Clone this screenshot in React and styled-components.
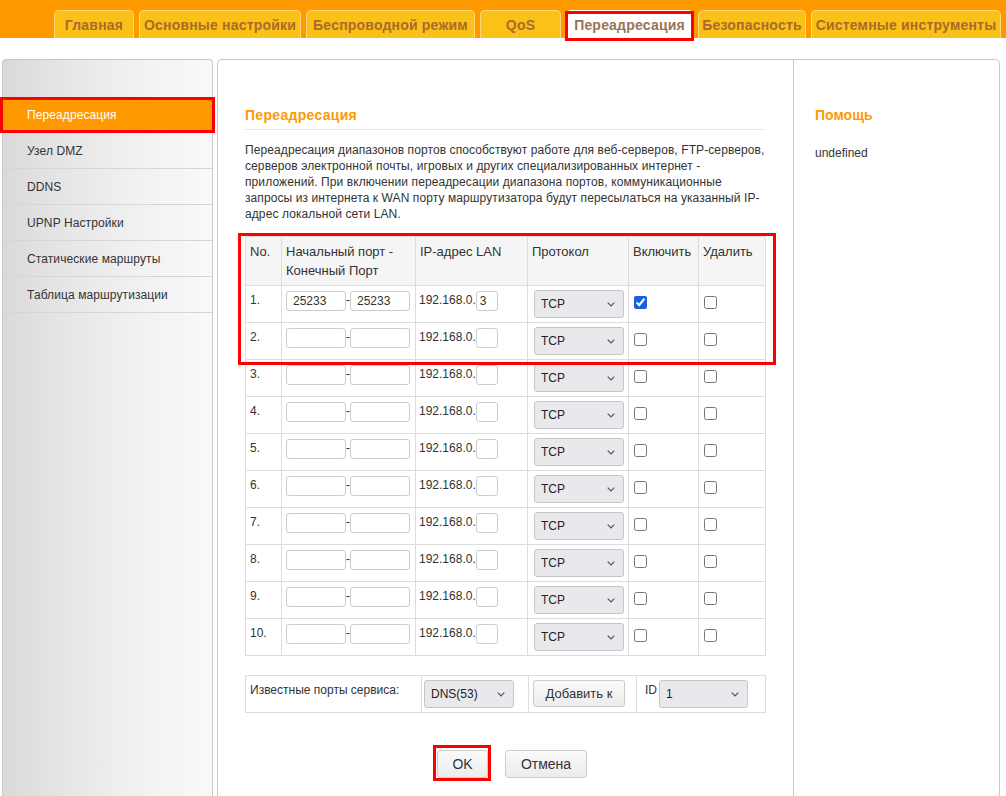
import React from 'react';
import styled, { createGlobalStyle, css } from 'styled-components';

const Global = createGlobalStyle`
  html, body { margin: 0; padding: 0; overflow: hidden; background: #fff; }
  body { font-family: "Liberation Sans", Arial, sans-serif; color: #333; }
  * { box-sizing: border-box; }
`;

const redBox = css`
  &::after {
    content: '';
    position: absolute;
    border: 3px solid #ff0000;
    pointer-events: none;
  }
`;

const Page = styled.div`
  height: 796px;
  display: flex;
  flex-direction: column;
  overflow: hidden;
`;

const Header = styled.div`
  height: 38px;
  flex: none;
  background: #ff9900;
  display: flex;
  align-items: flex-end;
  gap: 5px;
  padding-left: 54px;
`;

const Tab = styled.div`
  position: relative;
  height: 28px;
  width: ${p => p.$w}px;
  display: flex;
  align-items: center;
  justify-content: center;
  white-space: nowrap;
  background: ${p => (p.$active ? '#ffffff' : '#fbc116')};
  border: 1px solid ${p => (p.$active ? '#ffffff' : '#fdd97a')};
  border-bottom: none;
  border-radius: 5px 5px 0 0;
  font-weight: bold;
  font-size: 14px;
  letter-spacing: 0.2px;
  color: ${p => (p.$active ? '#9a7353' : '#a86b2e')};
  ${p => p.$marked && css`
    ${redBox}
    &::after { left: -2px; right: -2px; top: 0; bottom: -3px; }
  `}
`;

const Body = styled.div`
  flex: 1;
  display: flex;
  padding: 21px 0 0 2px;
  gap: 4px;
`;

const Sidebar = styled.div`
  width: 211px;
  flex: none;
  border: 1px solid #c9c9c9;
  border-bottom: none;
  border-radius: 4px 4px 0 0;
  background: linear-gradient(to right, #d9d9d9 0%, #e4e4e4 25%, #f0f0f0 60%, #f9f9f9 100%);
  padding-top: 37px;
  margin-bottom: -10px;
`;

const MenuItem = styled.div`
  position: relative;
  height: 36px;
  padding-left: 24px;
  display: flex;
  align-items: center;
  font-size: 12px;
  letter-spacing: 0.1px;
  border-bottom: 1px solid ${p => (p.$active ? 'transparent' : '#d6d6d6')};
  background: ${p => (p.$active ? '#ff9900' : 'transparent')};
  color: ${p => (p.$active ? '#ffffff' : '#333333')};
  ${p => p.$marked && css`
    ${redBox}
    &::after { left: -3px; right: -3px; top: 0; bottom: -1px; }
  `}
`;

const MainBox = styled.div`
  width: 783px;
  flex: none;
  display: flex;
  border: 1px solid #c9c9c9;
  border-bottom: none;
  border-radius: 5px 5px 0 0;
  margin-bottom: -10px;
`;

const Content = styled.div`
  width: 575px;
  flex: none;
  padding: 47px 0 0 27px;
`;

const HelpCol = styled.div`
  flex: 1;
  border-left: 1px solid #c9c9c9;
  padding: 47px 0 0 21px;
`;

const SectionTitle = styled.div`
  width: ${p => (p.$wide ? '520px' : 'auto')};
  font-size: 14px;
  font-weight: bold;
  line-height: 16px;
  letter-spacing: ${p => (p.$wide ? '0.3px' : '0')};
  color: #ff9900;
  padding-bottom: ${p => (p.$wide ? '6px' : '0')};
  border-bottom: ${p => (p.$wide ? '1px solid #e6e6e6' : 'none')};
`;

const HelpText = styled.div`
  margin-top: 23px;
  font-size: 12px;
  line-height: 14px;
  color: #333;
`;

const Desc = styled.p`
  width: 520px;
  margin: 12px 0 14px;
  font-size: 12px;
  line-height: 16px;
  letter-spacing: 0.095px;
  white-space: nowrap;
  color: #333;
`;

const TableWrap = styled.div`
  position: relative;
  width: 520px;
  ${p => p.$marked && css`
    ${redBox}
    &::after { left: -7px; top: -3px; width: 532px; height: 126px; }
  `}
`;

const Table = styled.table`
  width: 520px;
  border-collapse: collapse;
  table-layout: fixed;
  border: 1px solid #dddddd;
  margin-top: ${p => p.$mt || 0}px;
`;

const Th = styled.th`
  background: #f5f5f5;
  border: 1px solid #dddddd;
  text-align: left;
  vertical-align: top;
  font-weight: normal;
  font-size: 13px;
  line-height: 19px;
  color: #333;
  padding: 5px 4px 5px 4px;
`;

const Td = styled.td`
  border: 1px solid #dddddd;
  vertical-align: top;
  font-size: 12px;
  line-height: 14px;
  color: #333;
  padding: 4px 4px 4px ${p => p.$pl ?? 4}px;
  white-space: nowrap;
`;

const CellText = styled.span`
  display: inline-block;
  line-height: ${p => p.$lh || 14}px;
  vertical-align: top;
  margin-top: ${p => p.$mt ?? 3}px;
`;

const TextInput = styled.input`
  width: ${p => p.$w}px;
  height: 20px;
  margin: 1px 0 0;
  padding: 0 ${p => p.$px ?? 6}px;
  border: 1px solid #cccccc;
  border-radius: 3px;
  font-family: "Liberation Sans", Arial, sans-serif;
  font-size: 12px;
  color: #333;
  vertical-align: top;
  outline: none;
  background: #fff;
`;

const Dash = styled.span`
  display: inline-block;
  width: 4px;
  vertical-align: top;
  margin-top: 3px;
  line-height: 14px;
`;

const SelectBox = styled.span`
  position: relative;
  display: inline-block;
  vertical-align: top;
  margin-left: ${p => p.$ml || 0}px;
  width: ${p => p.$w}px;
  height: 28px;
`;

const Select = styled.select`
  appearance: none;
  -webkit-appearance: none;
  width: 100%;
  height: 100%;
  border: 1px solid #c6c6c6;
  border-radius: 3px;
  background: #e9e9ed;
  padding: 0 20px 0 6px;
  font-family: "Liberation Sans", Arial, sans-serif;
  font-size: 12px;
  color: #222;
  outline: none;
`;

const Chevron = styled.svg`
  position: absolute;
  right: 9px;
  top: 12px;
  width: 8px;
  height: 5px;
  pointer-events: none;
`;

const Check = styled.input.attrs({ type: 'checkbox' })`
  width: 13px;
  height: 13px;
  margin: 6px 0 0 1px;
  accent-color: #1a62dd;
  vertical-align: top;
`;

const Button = styled.button`
  position: relative;
  height: ${p => p.$h || 28}px;
  padding: 0 ${p => p.$px ?? 10}px;
  min-width: ${p => p.$mw || 0}px;
  border: 1px solid #cccccc;
  border-radius: 3px;
  background: linear-gradient(#fafafa, #ececec);
  font-family: "Liberation Sans", Arial, sans-serif;
  font-size: ${p => p.$fs || 14}px;
  color: #333;
  ${p => p.$marked && css`
    ${redBox}
    &::after { left: -5px; right: -4px; top: -6px; bottom: -4px; }
  `}
`;

const ButtonRow = styled.div`
  width: 520px;
  display: flex;
  justify-content: center;
  gap: 17px;
  padding-left: 14px;
  margin-top: 37px;
`;

const Sel = ({ w, ml, value, options }) => (
  <SelectBox $w={w} $ml={ml}>
    <Select defaultValue={value}>
      {options.map(o => (
        <option key={o}>{o}</option>
      ))}
    </Select>
    <Chevron viewBox="0 0 8 5">
      <path d="M0.7 0.7 L4 4 L7.3 0.7" fill="none" stroke="#555" strokeWidth="1.2" />
    </Chevron>
  </SelectBox>
);

const tabs = [
  { t: 'Главная', w: 80 },
  { t: 'Основные настройки', w: 162 },
  { t: 'Беспроводной режим', w: 169 },
  { t: 'QoS', w: 81 },
  { t: 'Переадресация', w: 127, active: true },
  { t: 'Безопасность', w: 108 },
  { t: 'Системные инструменты', w: 190 },
];

const menu = [
  'Переадресация',
  'Узел DMZ',
  'DDNS',
  'UPNP Настройки',
  'Статические маршруты',
  'Таблица маршрутизации',
];

const rows = Array.from({ length: 10 }, (_, i) => ({
  n: i + 1,
  start: i === 0 ? '25233' : '',
  end: i === 0 ? '25233' : '',
  ip: i === 0 ? '3' : '',
  on: i === 0,
}));

export default function App() {
  return (
    <Page>
      <Global />
      <Header>
        {tabs.map(t => (
          <Tab key={t.t} $w={t.w} $active={t.active} $marked={t.active}>
            {t.t}
          </Tab>
        ))}
      </Header>
      <Body>
        <Sidebar>
          {menu.map((m, i) => (
            <MenuItem key={m} $active={i === 0} $marked={i === 0}>
              {m}
            </MenuItem>
          ))}
        </Sidebar>
        <MainBox>
          <Content>
            <SectionTitle $wide>Переадресация</SectionTitle>
            <Desc>
              Переадресация диапазонов портов способствуют работе для веб-серверов, FTP-серверов,
              <br />
              серверов электронной почты, игровых и других специализированных интернет -
              <br />
              приложений. При включении переадресации диапазона портов, коммуникационные
              <br />
              запросы из интернета к WAN порту маршрутизатора будут пересылаться на указанный IP-
              <br />
              адрес локальной сети LAN.
            </Desc>
            <TableWrap $marked>
              <Table>
                <colgroup>
                  <col style={{ width: 36 }} />
                  <col style={{ width: 134 }} />
                  <col style={{ width: 112 }} />
                  <col style={{ width: 101 }} />
                  <col style={{ width: 70 }} />
                  <col style={{ width: 67 }} />
                </colgroup>
                <thead>
                  <tr>
                    <Th>No.</Th>
                    <Th>
                      Начальный порт -<br />
                      Конечный Порт
                    </Th>
                    <Th>IP-адрес LAN</Th>
                    <Th>Протокол</Th>
                    <Th>Включить</Th>
                    <Th>Удалить</Th>
                  </tr>
                </thead>
                <tbody>
                  {rows.map(r => (
                    <tr key={r.n}>
                      <Td>
                        <CellText>{r.n}.</CellText>
                      </Td>
                      <Td>
                        <TextInput $w={60} defaultValue={r.start} />
                        <Dash>-</Dash>
                        <TextInput $w={60} defaultValue={r.end} />
                      </Td>
                      <Td $pl={3}>
                        <CellText>192.168.0.</CellText>
                        <TextInput $w={22} $px={3} defaultValue={r.ip} />
                      </Td>
                      <Td>
                        <Sel w={90} ml={2} value="TCP" options={['TCP', 'UDP', 'Оба']} />
                      </Td>
                      <Td>
                        <Check defaultChecked={r.on} />
                      </Td>
                      <Td>
                        <Check />
                      </Td>
                    </tr>
                  ))}
                </tbody>
              </Table>
            </TableWrap>
            <Table $mt={19}>
              <colgroup>
                <col style={{ width: 176 }} />
                <col style={{ width: 107 }} />
                <col style={{ width: 108 }} />
                <col style={{ width: 129 }} />
              </colgroup>
              <tbody>
                <tr>
                  <Td>
                    <CellText $lh={18} $mt={1}>Известные порты сервиса:</CellText>
                  </Td>
                  <Td $pl={2}>
                    <Sel w={90} value="DNS(53)" options={['DNS(53)', 'FTP(21)', 'HTTP(80)']} />
                  </Td>
                  <Td>
                    <Button $h={27} $mw={92} $fs={13}>Добавить к</Button>
                  </Td>
                  <Td $pl={8}>
                    <CellText $lh={18} $mt={1}>ID</CellText>
                    <Sel w={89} ml={2} value="1" options={['1', '2', '3', '4', '5', '6', '7', '8', '9', '10']} />
                  </Td>
                </tr>
              </tbody>
            </Table>
            <ButtonRow>
              <Button $marked $mw={51} $fs={14}>OK</Button>
              <Button $mw={82} $fs={14}>Отмена</Button>
            </ButtonRow>
          </Content>
          <HelpCol>
            <SectionTitle>Помощь</SectionTitle>
            <HelpText>undefined</HelpText>
          </HelpCol>
        </MainBox>
      </Body>
    </Page>
  );
}
